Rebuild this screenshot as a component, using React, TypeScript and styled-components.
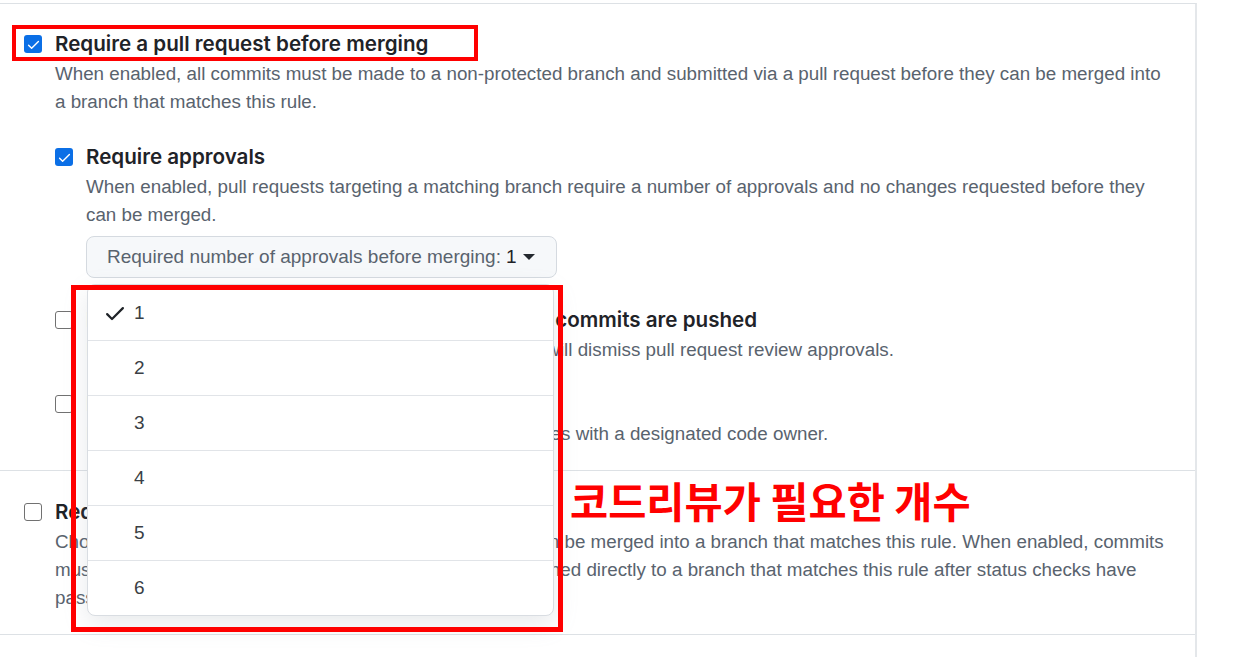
import React from "react";
import styled, { createGlobalStyle } from "styled-components";

const GlobalStyle = createGlobalStyle`
  html, body {
    margin: 0;
    background: #ffffff;
    font-family: "Liberation Sans", Arial, sans-serif;
    color: #1f2328;
  }
`;

const Page = styled.div`
  position: relative;
  width: 1250px;
  height: 657px;
  overflow: hidden;
  padding-top: 3px;
  box-sizing: border-box;
`;

const Panel = styled.div`
  width: 1197px;
  box-sizing: border-box;
  border-top: 1px solid #dde1e5;
  border-right: 2px solid #e4e7ea;
  height: 660px;
`;

const Section = styled.div`
  padding: 24px 25px 22px 24px;
  & + & {
    border-top: 1px solid #dde1e5;
    padding-top: 25px;
    padding-bottom: 22px;
  }
`;

const Option = styled.div<{ $nested?: boolean; $gap?: number }>`
  display: grid;
  grid-template-columns: 18px 1fr;
  column-gap: 13px;
  margin-top: ${(p) => (p.$nested ? `${p.$gap ?? 25}px` : "0")};
`;

const Box = styled.span<{ $checked?: boolean }>`
  width: 18px;
  height: 18px;
  margin-top: 7px;
  box-sizing: border-box;
  border-radius: 3px;
  display: flex;
  align-items: center;
  justify-content: center;
  background: ${(p) => (p.$checked ? "#0b6fe6" : "#ffffff")};
  border: ${(p) => (p.$checked ? "none" : "1.5px solid #717171")};
`;

const OptionBody = styled.div`
  min-width: 0;
`;

const Label = styled.div`
  font-family: Inter, "Liberation Sans", sans-serif;
  font-size: 20.6px;
  font-weight: 600;
  line-height: 32px;
  color: #1f2328;
  white-space: nowrap;
`;

const Note = styled.div`
  font-size: 18.8px;
  line-height: 28px;
  color: #59636e;
`;

const SelectWrap = styled.div`
  position: relative;
  margin-top: 7px;
  width: 471px;
`;

const SelectButton = styled.div`
  height: 42px;
  box-sizing: border-box;
  border: 1px solid #d5dae0;
  border-radius: 8px;
  background: #f6f8fa;
  display: flex;
  align-items: center;
  padding: 0 20px;
  font-size: 19px;
  color: #59636e;
  white-space: nowrap;
`;

const SelectValue = styled.span`
  color: #1f2328;
  margin-left: 5px;
`;

const Caret = styled.span`
  width: 0;
  height: 0;
  margin-left: 6px;
  border-left: 6px solid transparent;
  border-right: 6px solid transparent;
  border-top: 6px solid #24292f;
`;

const Menu = styled.div`
  position: absolute;
  top: calc(100% + 6px);
  left: 1px;
  width: 467px;
  box-sizing: border-box;
  background: #ffffff;
  border: 1px solid #d9dde2;
  border-radius: 8px;
  box-shadow: 0 8px 24px rgba(140, 149, 159, 0.2);
  z-index: 2;
  overflow: hidden;
`;

const MenuItem = styled.div`
  height: 55px;
  box-sizing: border-box;
  display: flex;
  align-items: center;
  padding-left: 15px;
  font-size: 19px;
  color: #3a3f45;
  & + & {
    border-top: 1px solid #e1e4e8;
  }
`;

const CheckSlot = styled.span`
  width: 24px;
  height: 24px;
  margin-right: 7px;
  display: flex;
  align-items: center;
  justify-content: center;
`;

const RedFrame = styled.div<{ $x: number; $y: number; $w: number; $h: number; $t: number }>`
  position: absolute;
  left: ${(p) => p.$x}px;
  top: ${(p) => p.$y}px;
  width: ${(p) => p.$w}px;
  height: ${(p) => p.$h}px;
  box-sizing: border-box;
  border: ${(p) => p.$t}px solid #ff0000;
  z-index: 3;
  pointer-events: none;
`;

const Callout = styled.div`
  position: absolute;
  left: 570px;
  top: 475px;
  font-family: "Noto Sans CJK KR", sans-serif;
  font-weight: 700;
  font-size: 41.5px;
  line-height: 50px;
  color: #ff0000;
  white-space: nowrap;
  z-index: 3;
`;

const Tick = ({ color, size }: { color: string; size: number }) => (
  <svg width={size} height={size} viewBox="0 0 16 16" fill={color}>
    <path d="M13.78 4.22a.75.75 0 0 1 0 1.06l-7.25 7.25a.75.75 0 0 1-1.06 0L2.22 9.28a.751.751 0 0 1 .018-1.042.751.751 0 0 1 1.042-.018L6 10.94l6.72-6.72a.75.75 0 0 1 1.06 0Z" />
  </svg>
);

const CheckBox = ({ checked }: { checked?: boolean }) => (
  <Box $checked={checked}>{checked && <Tick color="#ffffff" size={15} />}</Box>
);

const approvals = [1, 2, 3, 4, 5, 6];

export default function App() {
  const selected = 1;
  return (
    <>
      <GlobalStyle />
      <Page>
        <Panel>
          <Section>
            <Option>
              <CheckBox checked />
              <OptionBody>
                <Label>Require a pull request before merging</Label>
                <Note>
                  When enabled, all commits must be made to a non-protected branch and submitted via a pull request
                  before they can be merged into a branch that matches this rule.
                </Note>

                <Option $nested>
                  <CheckBox checked />
                  <OptionBody>
                    <Label>Require approvals</Label>
                    <Note>
                      When enabled, pull requests targeting a matching branch require a number of approvals and no
                      changes requested before they can be merged.
                    </Note>
                    <SelectWrap>
                      <SelectButton>
                        Required number of approvals before merging:
                        <SelectValue>{selected}</SelectValue>
                        <Caret />
                      </SelectButton>
                      <Menu>
                        {approvals.map((n) => (
                          <MenuItem key={n}>
                            <CheckSlot>{n === selected && <Tick color="#1f2328" size={24} />}</CheckSlot>
                            {n}
                          </MenuItem>
                        ))}
                      </Menu>
                    </SelectWrap>
                  </OptionBody>
                </Option>

                <Option $nested $gap={26}>
                  <CheckBox />
                  <OptionBody>
                    <Label>Dismiss stale pull request approvals when new commits are pushed</Label>
                    <Note>
                      New reviewable commits pushed to a matching branch will dismiss pull request review approvals.
                    </Note>
                  </OptionBody>
                </Option>

                <Option $nested $gap={24}>
                  <CheckBox />
                  <OptionBody>
                    <Label>Require review from Code Owners</Label>
                    <Note>
                      Require an approved review in pull requests including files with a designated code owner.
                    </Note>
                  </OptionBody>
                </Option>
              </OptionBody>
            </Option>
          </Section>

          <Section>
            <Option>
              <CheckBox />
              <OptionBody>
                <Label>Require status checks to pass before merging</Label>
                <Note>
                  Choose which status checks must pass before branches can be merged into a branch that matches this
                  rule. When enabled, commits must first be pushed to another branch, then merged or pushed directly
                  to a branch that matches this rule after status checks have passed.
                </Note>
              </OptionBody>
            </Option>
          </Section>

          <Section />
        </Panel>

        <RedFrame $x={12} $y={25} $w={466} $h={36} $t={4} />
        <RedFrame $x={71} $y={285} $w={492} $h={347} $t={5} />
        <Callout>코드리뷰가 필요한 개수</Callout>
      </Page>
    </>
  );
}
